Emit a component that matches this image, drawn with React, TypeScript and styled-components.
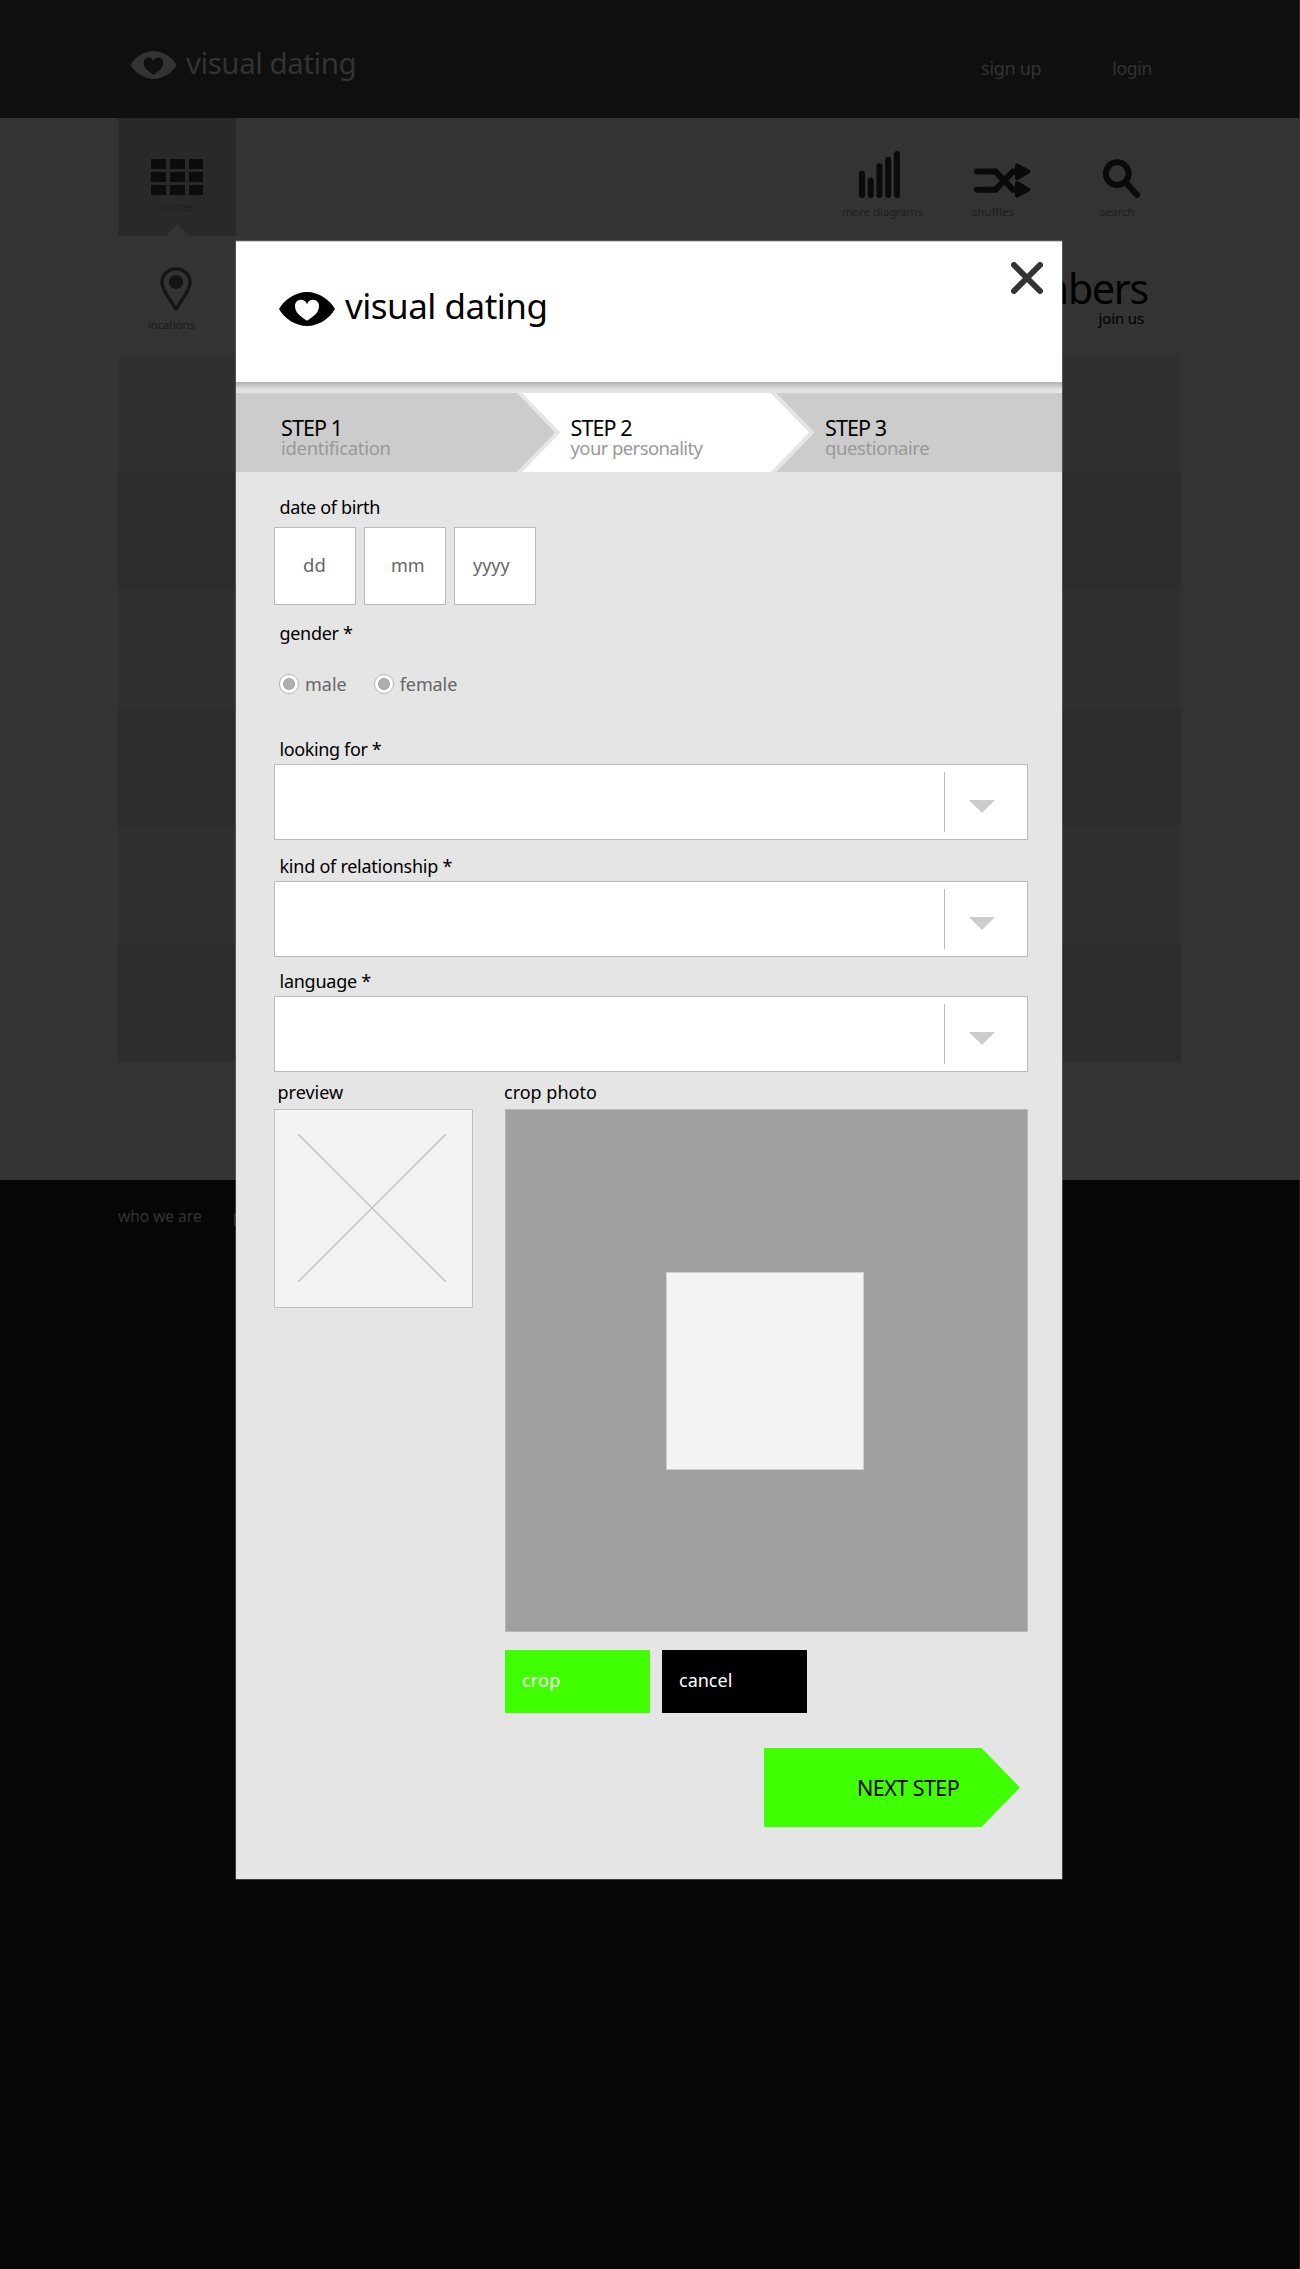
import React from "react";
import styled, { createGlobalStyle } from "styled-components";

const GlobalStyle = createGlobalStyle`
  *, *::before, *::after { box-sizing: border-box; }
  body {
    margin: 0;
    background: #060606;
    font-family: "Noto Sans", "Open Sans", sans-serif;
    font-kerning: normal;
  }
  button { font-family: inherit; border: 0; padding: 0; cursor: pointer; }
`;

const Text = styled.span<{ $size: number; $ls?: number; $color?: string; $lh?: number }>`
  display: block;
  white-space: nowrap;
  font-size: ${(p) => p.$size}px;
  line-height: ${(p) => p.$lh ?? 24}px;
  letter-spacing: ${(p) => p.$ls ?? 0}px;
  color: ${(p) => p.$color ?? "#000"};
`;

/* ---------- page behind the dialog ---------- */

const Page = styled.div`
  position: relative;
  width: 1300px;
  height: 2269px;
  overflow: hidden;
  background: #060606;
`;

const TopBar = styled.header`
  display: flex;
  align-items: flex-start;
  height: 118px;
  padding: 42px 147px 0 130px;
  background: #0f0f0f;
  border-right: 1px solid #2b2b2b;
`;

const TopLogo = styled.div`
  display: flex;
  gap: 9px;
  svg { margin-top: 9px; }
  span { margin-top: 1px; }
`;

const TopLinks = styled.nav`
  display: flex;
  gap: 71px;
  margin: 14px 0 0 auto;
`;

const Content = styled.main`
  height: 1062px;
  padding: 0 119px 0 118px;
  background: #333;
`;

const NavRow = styled.div`
  display: flex;
  justify-content: space-between;
  height: 118px;
`;

const HomeTile = styled.div`
  display: flex;
  flex-direction: column;
  align-items: center;
  width: 118px;
  height: 118px;
  padding-top: 41px;
  background: #292929;
  clip-path: polygon(0 0, 100% 0, 100% 100%, 71px 100%, 59.5px 106px, 48px 100%, 0 100%);
`;

const Tools = styled.div`
  display: flex;
  padding: 33px 46px 0 0;
`;

const Tool = styled.div<{ $w: number; $pad: number }>`
  display: flex;
  flex-direction: column;
  width: ${(p) => p.$w}px;
  svg { margin: 0 0 3px ${(p) => p.$pad}px; }
`;

const SubRow = styled.div`
  display: flex;
  justify-content: space-between;
  height: 118px;
`;

const Locations = styled.div`
  display: flex;
  flex-direction: column;
  width: 118px;
  padding: 31px 0 0 30px;
  svg { margin: 0 0 4px 12px; }
`;

const Members = styled.div`
  display: flex;
  flex-direction: column;
  align-items: flex-end;
  padding: 24px 33px 0 0;
`;

const JoinUs = styled(Text)`
  margin: -8px 4px 0 0;
`;

const Stripe = styled.div<{ $dark: boolean }>`
  height: 118px;
  background: ${(p) => (p.$dark ? "#2d2d2d" : "#303030")};
`;

const Footer = styled.footer`
  display: flex;
  gap: 31px;
  height: 1089px;
  padding: 24px 0 0 118px;
  background: #060606;
  border-right: 1px solid #222;
`;

/* ---------- dialog ---------- */

const Dialog = styled.section`
  position: absolute;
  left: 236px;
  top: 241px;
  width: 826px;
  height: 1638px;
  background: #e5e5e5;
  box-shadow: 0 0 0 0.5px #777;
`;

const DialogHead = styled.div`
  display: flex;
  justify-content: space-between;
  height: 141px;
  padding: 21px 19px 0 43px;
  background: #fff;
  border-top: 1px solid #ccc;
`;

const DialogLogo = styled.div`
  display: flex;
  gap: 10px;
  margin-top: 18px;
  svg { margin-top: 11px; }
`;

const CloseButton = styled.button`
  width: 32px;
  height: 32px;
  margin-top: -1px;
  background: none;
`;

const Shade = styled.div`
  height: 11px;
  background: linear-gradient(#b4b4b4 0, #c4c4c4 3px, #dadada 6px, #e5e5e5 9px);
`;

const Steps = styled.div`
  display: flex;
  height: 79px;
`;

const Step = styled.div<{ $w: number; $shape: string; $pad: number; $active?: boolean; $pull?: number }>`
  width: ${(p) => p.$w}px;
  height: 79px;
  margin-left: ${(p) => p.$pull ?? 0}px;
  padding: 23px 0 0 ${(p) => p.$pad}px;
  background: ${(p) => (p.$active ? "#fff" : "#ccc")};
  clip-path: polygon(${(p) => p.$shape});
`;

const Form = styled.form`
  display: flex;
  flex-direction: column;
  padding: 23px 34px 0 38px;
`;

const Label = styled(Text)<{ $top?: number; $left?: number }>`
  margin: ${(p) => p.$top ?? 0}px 0 0 ${(p) => p.$left ?? 5.5}px;
`;

const DateRow = styled.div`
  display: flex;
  gap: 8px;
  margin-top: 8px;
`;

const DateBox = styled.div<{ $pad: number }>`
  width: 82px;
  height: 78px;
  padding: 25px 0 0 ${(p) => p.$pad}px;
  background: #fff;
  border: 1px solid #b9b9b9;
`;

const RadioRow = styled.div`
  display: flex;
  gap: 27px;
  margin: 27px 0 0 5px;
`;

const RadioOption = styled.label`
  display: flex;
  align-items: center;
  gap: 6px;
`;

const Radio = styled.span`
  width: 20px;
  height: 20px;
  border-radius: 50%;
  border: 1px solid #b5b5b5;
  background: radial-gradient(circle, #adadad 5.6px, #fff 6.4px);
`;

const Select = styled.div`
  display: flex;
  justify-content: flex-end;
  width: 754px;
  height: 76px;
  margin-top: 3px;
  background: #fff;
  border: 1px solid #bbb;
`;

const SelectHandle = styled.div`
  width: 83px;
  height: 60px;
  margin-top: 7px;
  padding: 28px 0 0 24px;
  border-left: 1px solid #bbb;
`;

const Arrow = styled.div`
  width: 26px;
  height: 13px;
  background: #ccc;
  clip-path: polygon(0 0, 100% 0, 50% 100%);
`;

const PhotoRow = styled.div`
  display: flex;
  gap: 32px;
`;

const PreviewBox = styled.div`
  width: 199px;
  height: 199px;
  margin-top: 5px;
  padding: 23px 0 0 22px;
  background: #f3f3f3;
  border: 1px solid #c0c0c0;
`;

const CropArea = styled.div`
  display: flex;
  width: 523px;
  height: 523px;
  margin-top: 5px;
  padding: 162px 0 0 160px;
  background: #a0a0a0;
  border: 1px solid #b8b8b8;
`;

const CropWindow = styled.div`
  width: 198px;
  height: 198px;
  background: #f3f3f3;
  border: 1px solid #d0d0d0;
`;

const Actions = styled.div`
  display: flex;
  gap: 12px;
  margin: 18px 0 0;
`;

const ActionButton = styled.button<{ $bg: string }>`
  display: flex;
  align-items: flex-start;
  width: 145px;
  height: 63px;
  padding: 18px 0 0 17px;
  background: ${(p) => p.$bg};
`;

const NextButton = styled.button`
  align-self: flex-end;
  display: flex;
  width: 256px;
  height: 79px;
  margin: 35px 8px 0 0;
  padding: 26px 0 0 93px;
  background: #40ff00;
  clip-path: polygon(0 0, 217.5px 0, 100% 50%, 217.5px 100%, 0 100%);
`;

const EyeLogo = ({ w, h, fill, heart }: { w: number; h: number; fill: string; heart: string }) => (
  <svg width={w} height={h} viewBox="0 0 56 34">
    <path fill={fill} d="M0 17C5 8 16 0 28 0s23 8 28 17C51 26 40 34 28 34S5 26 0 17Z" />
    <path
      fill={heart}
      d="M28 12.3C27.2 9.6 24.8 7.8 21.9 7.8 18.5 7.8 16 10.6 16 14.1c0 6.3 4.6 10 12 14.6 7.4-4.6 12-8.3 12-14.6 0-3.5-2.5-6.3-5.9-6.3-2.9 0-5.3 1.8-6.1 4.5Z"
    />
  </svg>
);

const GridIcon = () => (
  <svg width="52" height="36" viewBox="0 0 52 36" fill="#0c0c0c">
    {[0, 13, 26].map((y) => [0, 19, 38].map((x) => <rect key={`${x}-${y}`} x={x} y={y} width={x === 38 ? 14 : 15} height="10" />))}
  </svg>
);

const BarsIcon = () => (
  <svg width="42" height="47" viewBox="0 0 42 47" fill="#0a0a0a">
    {[19.7, 26.7, 12.3, 5.7, 0].map((y, i) => (
      <rect key={y} x={i * 8.73} y={y} width="6" height={47 - y} rx="3" />
    ))}
  </svg>
);

const ShuffleIcon = () => (
  <svg width="57" height="47" viewBox="0 0 57 47" fill="none" stroke="#0a0a0a" strokeLinecap="round">
    <path strokeWidth="6" d="M3 20.5H21.5L39 38.7H44M3 38.7H21.5L39 20.5H44" />
    <path fill="#0a0a0a" strokeWidth="4" strokeLinejoin="round" d="M43 14.5 54.3 20.5 43 27.2ZM43 32 54.3 38.7 43 44.6Z" />
  </svg>
);

const SearchIcon = () => (
  <svg width="38" height="47" viewBox="0 0 38 47" fill="none" stroke="#0a0a0a" strokeWidth="6" strokeLinecap="round">
    <circle cx="14.2" cy="22.6" r="11.4" />
    <path d="M23.8 32.5 34 44" />
  </svg>
);

const PinIcon = () => (
  <svg width="32" height="45" viewBox="0 0 32 45">
    <path
      fill="none"
      stroke="#151515"
      strokeWidth="3.4"
      strokeLinejoin="round"
      d="M16 42.3C13 36 2 24.5 2 15.6 2 7.6 8.3 1.8 16 1.8s14 5.8 14 13.8C30 24.5 19 36 16 42.3Z"
    />
    <circle cx="16" cy="15" r="7.1" fill="#151515" />
  </svg>
);

const CloseIcon = () => (
  <svg width="32" height="32" viewBox="0 0 32 32" stroke="#333" strokeWidth="6" strokeLinecap="round">
    <path d="M3 3 29 29M29 3 3 29" />
  </svg>
);

const EmptyPhoto = () => (
  <svg width="150" height="150" viewBox="0 0 150 150" stroke="#b9b9b9" strokeWidth="1.2">
    <path d="M1 1 149 149M149 1 1 149" />
  </svg>
);

const SelectField = () => (
  <Select>
    <SelectHandle>
      <Arrow />
    </SelectHandle>
  </Select>
);

export default function App() {
  return (
    <Page>
      <GlobalStyle />
      <TopBar>
        <TopLogo>
          <EyeLogo w={47} h={28} fill="#333" heart="#0f0f0f" />
          <Text $size={29.6} $ls={-0.5} $lh={40} $color="#333">visual dating</Text>
        </TopLogo>
        <TopLinks>
          <Text $size={18} $ls={-0.3} $color="#333">sign up</Text>
          <Text $size={17.5} $ls={-0.3} $color="#333">login</Text>
        </TopLinks>
      </TopBar>
      <Content>
        <NavRow>
          <HomeTile>
            <GridIcon />
            <Text $size={11.5} $color="#1f1f1f">home</Text>
          </HomeTile>
          <Tools>
            <Tool $w={130} $pad={17}>
              <BarsIcon />
              <Text $size={11.5} $ls={-0.15} $lh={22} $color="#202020">more diagrams</Text>
            </Tool>
            <Tool $w={128} $pad={2}>
              <ShuffleIcon />
              <Text $size={11.5} $ls={-0.1} $lh={22} $color="#202020">shuffles</Text>
            </Tool>
            <Tool $w={35} $pad={3}>
              <SearchIcon />
              <Text $size={11.5} $ls={-0.2} $lh={22} $color="#202020">search</Text>
            </Tool>
          </Tools>
        </NavRow>
        <SubRow>
          <Locations>
            <PinIcon />
            <Text $size={11.5} $ls={-0.2} $lh={18} $color="#1c1c1c">locations</Text>
          </Locations>
          <Members>
            <Text $size={41} $ls={-1.2} $lh={56}>members</Text>
            <JoinUs $size={15} $ls={-0.15} $lh={20}>join us</JoinUs>
          </Members>
        </SubRow>
        {[false, true, false, true, false, true].map((dark, i) => (
          <Stripe key={i} $dark={dark} />
        ))}
      </Content>
      <Footer>
        <Text $size={15.5} $color="#333">who we are</Text>
        <Text $size={15.5} $color="#333">privacy</Text>
      </Footer>

      <Dialog>
        <DialogHead>
          <DialogLogo>
            <EyeLogo w={56} h={34} fill="#000" heart="#fff" />
            <Text $size={35} $ls={-0.5} $lh={50}>visual dating</Text>
          </DialogLogo>
          <CloseButton type="button" aria-label="close">
            <CloseIcon />
          </CloseButton>
        </DialogHead>
        <Shade />
        <Steps>
          <Step $w={319} $pad={45} $shape="0 0, 281px 0, 100% 50%, 281px 100%, 0 100%">
            <Text $size={21.5} $ls={-0.9} $lh={24}>STEP 1</Text>
            <Text $size={18.5} $ls={-0.3} $lh={16} $color="#999">identification</Text>
          </Step>
          <Step $w={287} $pad={48.5} $pull={-33} $active $shape="0 0, 248.5px 0, 100% 50%, 248.5px 100%, 0 100%, 38.5px 50%">
            <Text $size={21.5} $ls={-0.9} $lh={24}>STEP 2</Text>
            <Text $size={18.5} $ls={-0.6} $lh={16} $color="#999">your personality</Text>
          </Step>
          <Step $w={286} $pad={49} $pull={-33} $shape="0.5px 0, 100% 0, 100% 100%, 0.5px 100%, 38.5px 50%">
            <Text $size={21.5} $ls={-0.9} $lh={24}>STEP 3</Text>
            <Text $size={18.5} $ls={-0.4} $lh={16} $color="#999">questionaire</Text>
          </Step>
        </Steps>
        <Form>
          <Label $size={18} $ls={-0.35}>date of birth</Label>
          <DateRow>
            <DateBox $pad={28}><Text $size={18.5} $color="#666">dd</Text></DateBox>
            <DateBox $pad={26}><Text $size={18} $color="#666">mm</Text></DateBox>
            <DateBox $pad={18}><Text $size={18} $color="#666">yyyy</Text></DateBox>
          </DateRow>
          <Label $size={18} $ls={-0.3} $top={16}>gender *</Label>
          <RadioRow>
            <RadioOption>
              <Radio />
              <Text $size={18} $color="#666">male</Text>
            </RadioOption>
            <RadioOption>
              <Radio />
              <Text $size={18} $ls={-0.1} $color="#666">female</Text>
            </RadioOption>
          </RadioRow>
          <Label $size={18} $ls={-0.37} $top={41}>looking for *</Label>
          <SelectField />
          <Label $size={18} $ls={-0.25} $top={14}>kind of relationship *</Label>
          <SelectField />
          <Label $size={18} $ls={-0.25} $top={12}>language *</Label>
          <SelectField />
          <PhotoRow>
            <div>
              <Label $size={18} $top={8} $left={3.5}>preview</Label>
              <PreviewBox>
                <EmptyPhoto />
              </PreviewBox>
            </div>
            <div>
              <Label $size={18} $top={8} $left={-1}>crop photo</Label>
              <CropArea>
                <CropWindow />
              </CropArea>
              <Actions>
                <ActionButton type="button" $bg="#40ff00">
                  <Text $size={18} $ls={0.2} $color="#fff">crop</Text>
                </ActionButton>
                <ActionButton type="button" $bg="#000">
                  <Text $size={18} $color="#fff">cancel</Text>
                </ActionButton>
              </Actions>
            </div>
          </PhotoRow>
          <NextButton type="button">
            <Text $size={21.5} $ls={-0.55} $lh={28}>NEXT STEP</Text>
          </NextButton>
        </Form>
      </Dialog>
    </Page>
  );
}
